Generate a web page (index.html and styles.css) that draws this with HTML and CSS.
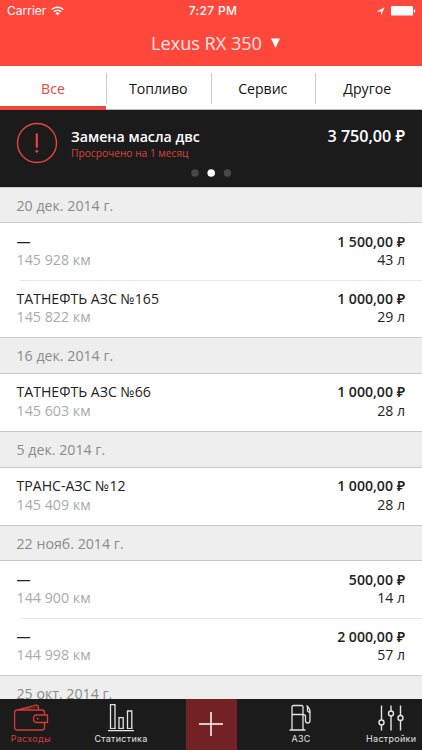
FILE: index.html
```
<!DOCTYPE html>
<html lang="ru">
<head>
<meta charset="utf-8">
<title>Расходы</title>
<link rel="stylesheet" href="styles.css">
</head>
<body>
<div class="app">
  <header class="header">
    <div class="status">
      <div class="status-left"><span class="carrier">Carrier</span>
        <svg class="wifi" width="13" height="10" viewBox="0 0 13 10" fill="none" stroke="#fff" stroke-width="1.5"><path d="M.7 3.5a8.3 8.3 0 0 1 11.6 0M2.8 5.7a5.3 5.3 0 0 1 7.4 0"/><path d="M6.5 9.4 4.4 7.3a3 3 0 0 1 4.2 0z" fill="#fff" stroke="none"/></svg>
      </div>
      <span class="clock">7:27 PM</span>
      <div class="status-right">
        <svg width="9" height="9" viewBox="0 0 9 9" fill="#fff"><path d="M8.7.2 4.9 8.6V4.5H.4z"/></svg>
        <svg width="25" height="10" viewBox="0 0 25 10" fill="#fff"><rect width="22" height="9.6" rx="1.2"/><path d="M22.8 3.2c2 .4 2 2.9 0 3.4z"/></svg>
      </div>
    </div>
    <h1 class="title"><span>Lexus RX 350</span><svg width="9" height="10" viewBox="0 0 9 10"><path d="M0 .5h9L4.5 10z" fill="#fff"/></svg></h1>
  </header>
  <nav class="tabs">
    <a class="tab active">Все</a><a class="tab">Топливо</a><a class="tab">Сервис</a><a class="tab">Другое</a>
  </nav>
  <section class="alert">
    <div class="alert-body">
      <svg class="alert-icon" width="42" height="42" viewBox="0 0 42 42" fill="none" stroke="#e9443b"><circle cx="21" cy="21" r="19.5" stroke-width="1.4"/><path d="M20.8 12.3v12.5" stroke-width="2.2" stroke-linecap="round"/><circle cx="20.8" cy="29.3" r="1.4" fill="#e9443b" stroke="none"/></svg>
      <div class="alert-text"><div class="alert-title">Замена масла двс</div><div class="alert-sub">Просрочено на 1 месяц</div></div>
      <div class="alert-sum">3 750,00 ₽</div>
    </div>
    <svg class="dots" width="41" height="8" viewBox="0 0 41 8" fill="#484848"><circle cx="4" cy="4" r="3.7"/><circle cx="20.2" cy="4" r="3.8" fill="#fff"/><circle cx="36.400" cy="4" r="3.7"/></svg>
  </section>
  <main class="list">
    <h2 class="date">20 дек. 2014 г.</h2>
    <div class="row"><div><div class="name">—</div><div class="km">145 928 км</div></div><div class="right"><div class="sum">1 500,00 ₽</div><div class="litres">43 л</div></div></div>
    <div class="row next"><div><div class="name">ТАТНЕФТЬ АЗС №165</div><div class="km">145 822 км</div></div><div class="right"><div class="sum">1 000,00 ₽</div><div class="litres">29 л</div></div></div>
    <h2 class="date">16 дек. 2014 г.</h2>
    <div class="row"><div><div class="name">ТАТНЕФТЬ АЗС №66</div><div class="km">145 603 км</div></div><div class="right"><div class="sum">1 000,00 ₽</div><div class="litres">28 л</div></div></div>
    <h2 class="date">5 дек. 2014 г.</h2>
    <div class="row"><div><div class="name">ТРАНС-АЗС №12</div><div class="km">145 409 км</div></div><div class="right"><div class="sum">1 000,00 ₽</div><div class="litres">28 л</div></div></div>
    <h2 class="date">22 нояб. 2014 г.</h2>
    <div class="row"><div><div class="name">—</div><div class="km">144 900 км</div></div><div class="right"><div class="sum">500,00 ₽</div><div class="litres">14 л</div></div></div>
    <div class="row next"><div><div class="name">—</div><div class="km">144 998 км</div></div><div class="right"><div class="sum">2 000,00 ₽</div><div class="litres">57 л</div></div></div>
    <h2 class="date">25 окт. 2014 г.</h2>
  </main>
  <nav class="bar">
    <a class="item current"><svg width="36" height="30" viewBox="0 0 36 30" fill="none" stroke="#d63d36" stroke-width="1.3" stroke-linejoin="round"><path d="M31.500 12V9.500Q31.500 7 29 7H4Q1.600 7 1.600 9.500V24.500Q1.600 27 4.500 27H29Q31.500 27 31.500 24.500V19.500M2.500 7.300 23 2.200Q25 1.800 25.500 4V6.500M23.500 12H34.500V19.500H23.500Q20.500 19.500 20.500 15.800T23.500 12z"/><path d="M10 6.200 25.500 4.100" stroke-width=".6"/><circle cx="24.700" cy="15.800" r="1" fill="#d63d36" stroke="none"/></svg><span>Расходы</span></a>
    <a class="item"><svg width="28" height="30" viewBox="0 0 28 30" fill="none" stroke="#e4e4e4" stroke-width="1.3"><path d="M1 27.700H27M3.500 26V1.600H8V26M12 26V14.600H16.200V26M20.500 26V8H24.800V26"/><path d="M3 25.400H8.500M11.500 25.400H16.700M20 25.400H25.300" stroke-width="1"/></svg><span>Статистика</span></a>
    <a class="item add"><svg width="24" height="24" viewBox="0 0 24 24" stroke="#fff" stroke-width="1.500"><path d="M12 0V24M0 12H24"/></svg></a>
    <a class="item"><svg width="24" height="30" viewBox="0 0 24 30" fill="none" stroke="#e4e4e4" stroke-width="1.300"><path d="M.500 27H16.500M3 26.500V4Q3 2.500 4.500 2.500H12.500Q14 2.500 14 4V26.500M3 11.500H14M14 12H15.500Q16.500 12 16.500 13.500V17.500Q16.500 20 18.700 20T21 17.500V8.500Q21 5.500 17.500 2.500M18.500 4V8L21 10"/></svg><span>АЗС</span></a>
    <a class="item last"><svg width="28" height="30" viewBox="0 0 28 30" fill="none" stroke="#e4e4e4" stroke-width="1.400"><path d="M4.500 2.500V17M4.500 22V27.500M14 2.500V8M14 13V27.500M23.500 2.500V12.500M23.500 17.500V27.500"/><circle cx="4.500" cy="19.500" r="2.500"/><circle cx="14" cy="10.500" r="2.500"/><circle cx="23.500" cy="15" r="2.500"/></svg><span>Настройки</span></a>
  </nav>
</div>
</body>
</html>
```
FILE: styles.css
```
* { box-sizing: border-box; }
body { margin: 0; font-family: "Open Sans", "Noto Sans", sans-serif; color: #222; }
.app { width: 422px; height: 750px; display: flex; flex-direction: column; overflow: hidden; background: #fff; }
.header { height: 65.5px; flex: none; background: #ff473c; color: #fff; }
.status { height: 22px; padding: 0 7px; display: grid; grid-template-columns: 1fr auto 1fr; align-items: center; font: 12px/22px Inter, sans-serif; }
.status-left { display: flex; align-items: center; gap: 5px; }
.carrier { letter-spacing: 0; }
.clock { font-weight: 500; letter-spacing: .3px; position: relative; left: 2px; }
.status-right { display: flex; justify-content: flex-end; align-items: center; gap: 6px; margin-right: -1px; }
.title { margin: 0; height: 42px; padding-left: 9px; display: flex; justify-content: center; align-items: center; gap: 9px; font-size: 18.1px; font-weight: 400; color: #ffe8e6; }
.tabs { height: 44.5px; flex: none; display: grid; grid-template-columns: 106px 104.5px 104.5px 104.5px; border-bottom: 1px solid #bbb; }
.tab { position: relative; text-align: center; font-size: 14.1px; line-height: 46px; color: #111; }
.tab + .tab::before { content: ""; position: absolute; left: 0; top: 7px; height: 31px; width: 1px; background: #ccc; }
.tab.active { color: #e8473e; border-bottom: 4px solid #f2463c; height: 44.5px; z-index: 1; }
.alert { height: 76.5px; flex: none; background: #1b1b1b; color: #fff; }
.alert-body { height: 59px; display: flex; padding: 12px 17px 0 16px; }
.alert-text { flex: 1; padding: 5px 0 0 13px; }
.alert-title { font-size: 14.2px; line-height: 19px; font-weight: 600; }
.alert-sub { font-size: 10.2px; line-height: 14px; color: #dc443c; }
.alert-sum { font-size: 16.1px; line-height: 28px; font-weight: 600; }
.dots { display: block; margin: 0 auto; }
.list { flex: 1; min-height: 0; overflow: hidden; }
.date { margin: 0; height: 36.7px; padding-left: 16.5px; font-size: 14.2px; line-height: 35.4px; font-weight: 400; color: #8b8b8b; background: #eee; border-top: 1px solid #c8c8c8; border-bottom: 1px solid #c8c8c8; }
.row { position: relative; height: 57px; display: flex; justify-content: space-between; padding: 9.6px 17px 0 16.5px; font-size: 14.1px; line-height: 18.5px; }
.next::before { content: ""; position: absolute; left: 20px; right: 0; top: 0; height: 1px; background: #e6e6e6; }
.right { text-align: right; }
.sum { font-weight: 600; }
.km { color: #aaa; font-size: 14.25px; }
.bar { height: 51.5px; flex: none; display: grid; grid-template-columns: 56.5px 129px 51px 129px 56.5px; background: #1b1b1b; color: #e4e4e4; }
.item { display: flex; flex-direction: column; align-items: center; padding-top: 4px; font: 9px/12px Inter, sans-serif; letter-spacing: .3px; white-space: nowrap; }
.item.current { color: #d63d36; padding-left: 5px; }
.item.last { padding-right: 5px; }
.item.add { background: #722125; justify-content: center; padding: 0; }
```
